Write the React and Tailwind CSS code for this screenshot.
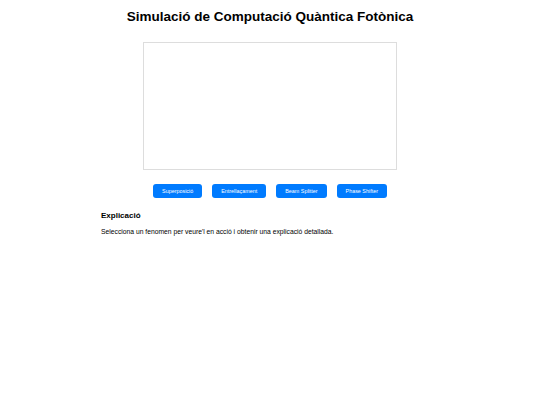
import React from 'react'

const phenomena = ['Superposició', 'Entrellaçament', 'Beam Splitter', 'Phase Shifter']

export default function App() {
  return (
    <div className="min-h-screen bg-white text-black" style={{ fontFamily: '"Liberation Sans", Arial, sans-serif' }}>
      <div className="w-[338px] mx-auto pt-[8px]">
        <h1 className="text-center text-[13.5px] font-bold leading-[18px] -mx-[40px]">
          Simulació de Computació Quàntica Fotònica
        </h1>

        <div className="flex justify-center mt-[16px]">
          <div className="w-[254px] h-[128px] border border-[#dddddd] bg-white" />
        </div>

        <div className="flex justify-center gap-[10px] mt-[14px]">
          {phenomena.map((p) => (
            <button
              key={p}
              className="h-[14px] px-[9px] rounded-[3px] bg-[#007bff] text-white text-[5.4px] leading-[14px]"
            >
              {p}
            </button>
          ))}
        </div>

        <div className="mt-[12px]">
          <h2 className="text-[8px] font-bold leading-[12px]">Explicació</h2>
          <p className="text-[6.75px] leading-[10px] mt-[5px]">
            Selecciona un fenomen per veure'l en acció i obtenir una explicació detallada.
          </p>
        </div>
      </div>
    </div>
  )
}
